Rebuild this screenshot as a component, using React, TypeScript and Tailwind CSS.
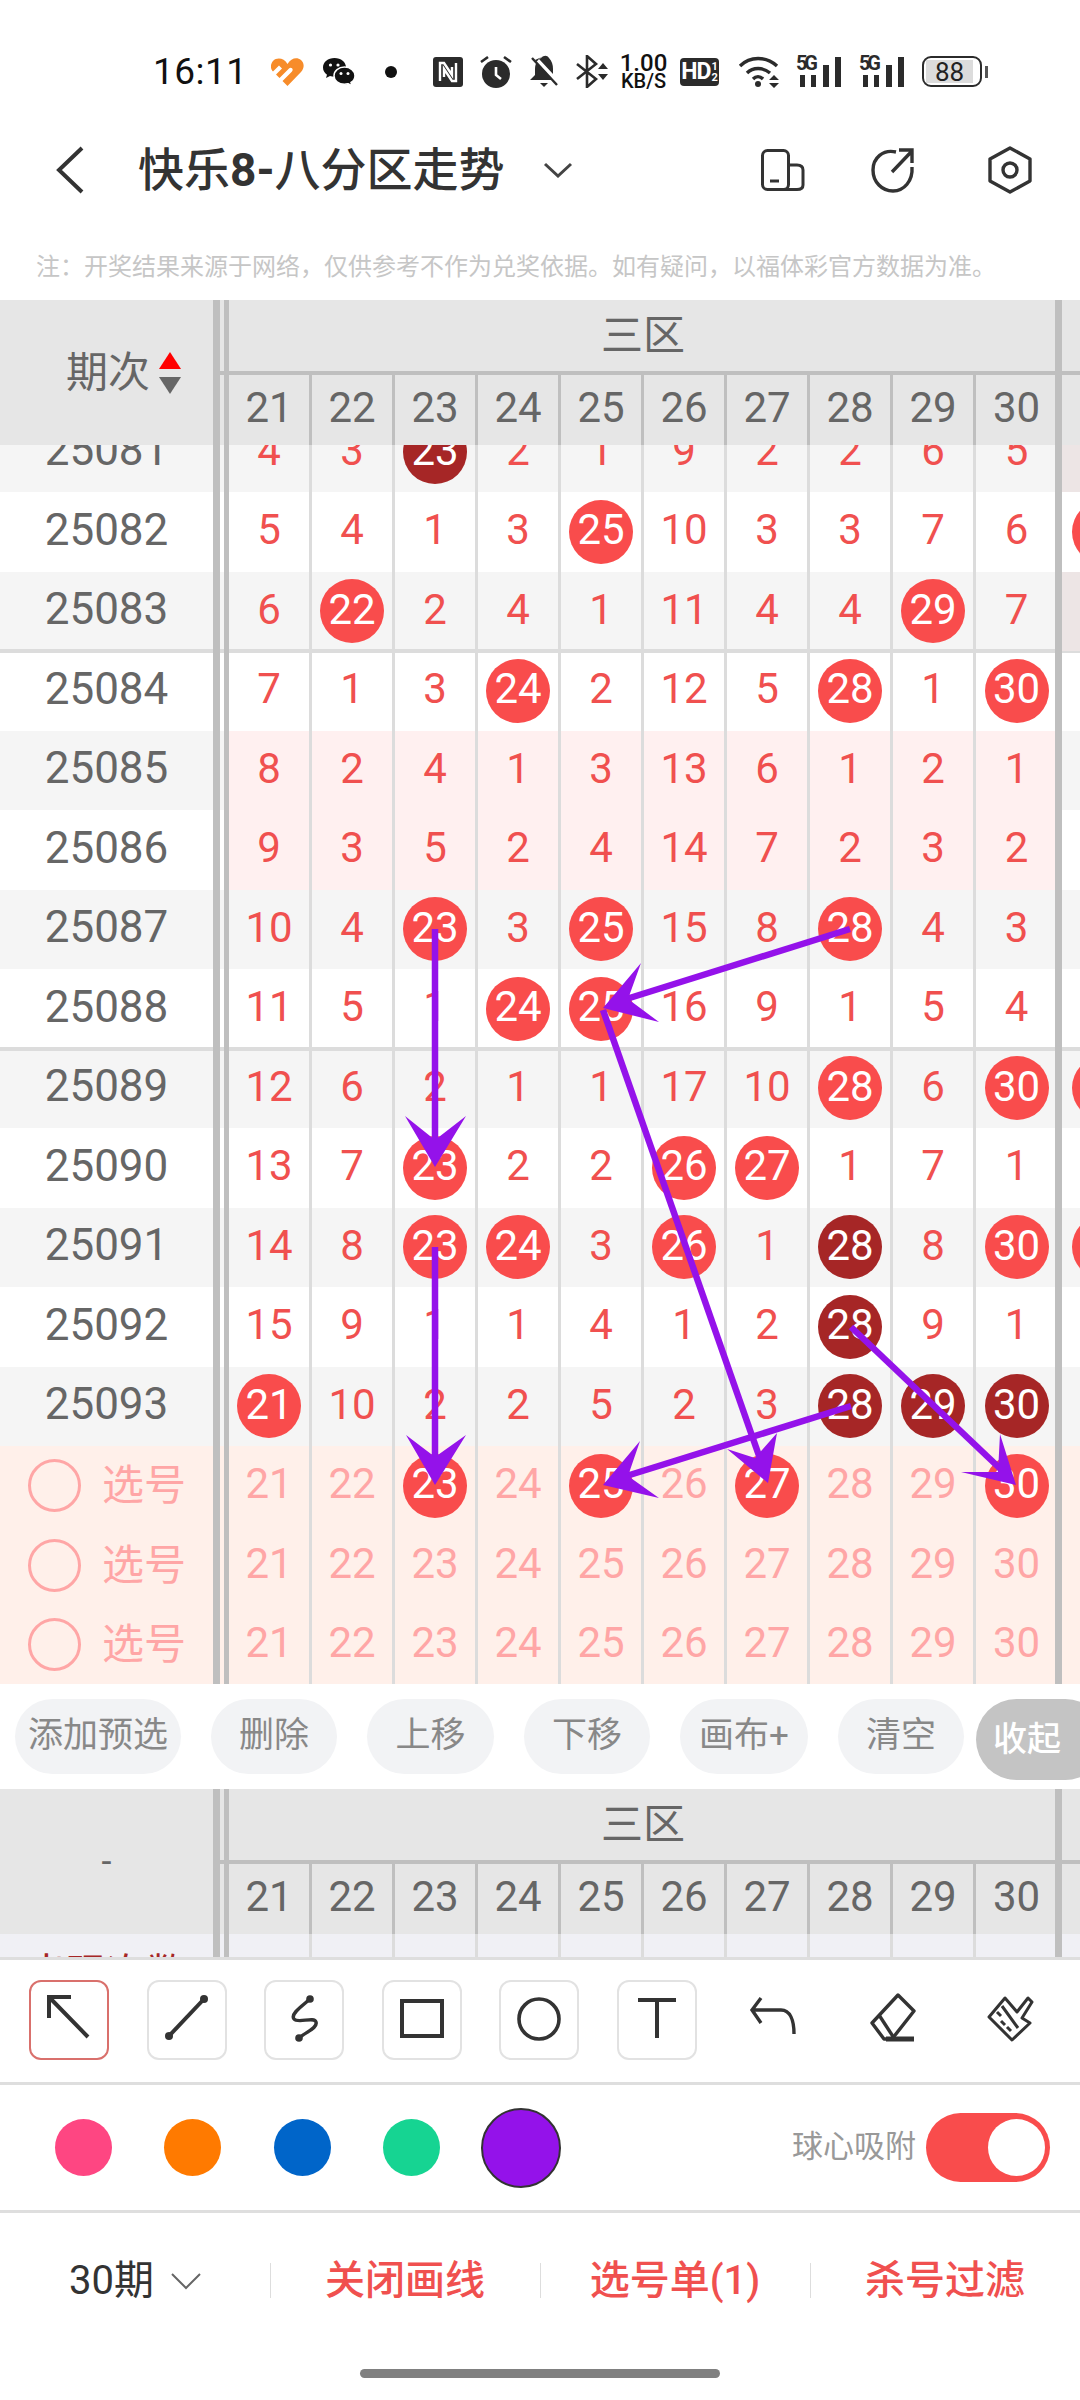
import React from 'react';

const ROWS: { id: string; v: string[]; side?: boolean; band?: boolean; sidePink?: boolean; lineB?: boolean; lineT?: boolean }[] = [
  { id: '25081', v: ['4', '3', '#23', '2', '1', '9', '2', '2', '6', '5'], sidePink: true },
  { id: '25082', v: ['5', '4', '1', '3', '*25', '10', '3', '3', '7', '6'], side: true },
  { id: '25083', v: ['6', '*22', '2', '4', '1', '11', '4', '4', '*29', '7'], sidePink: true, lineB: true },
  { id: '25084', v: ['7', '1', '3', '*24', '2', '12', '5', '*28', '1', '*30'], lineT: true },
  { id: '25085', v: ['8', '2', '4', '1', '3', '13', '6', '1', '2', '1'], band: true },
  { id: '25086', v: ['9', '3', '5', '2', '4', '14', '7', '2', '3', '2'], band: true },
  { id: '25087', v: ['10', '4', '*23', '3', '*25', '15', '8', '*28', '4', '3'] },
  { id: '25088', v: ['11', '5', '1', '*24', '*25', '16', '9', '1', '5', '4'], lineB: true },
  { id: '25089', v: ['12', '6', '2', '1', '1', '17', '10', '*28', '6', '*30'], side: true, lineT: true },
  { id: '25090', v: ['13', '7', '*23', '2', '2', '*26', '*27', '1', '7', '1'] },
  { id: '25091', v: ['14', '8', '*23', '*24', '3', '*26', '1', '#28', '8', '*30'], side: true },
  { id: '25092', v: ['15', '9', '1', '1', '4', '1', '2', '#28', '9', '1'] },
  { id: '25093', v: ['*21', '10', '2', '2', '5', '2', '3', '#28', '#29', '#30'] },
];

const PICKS = [
  ['21', '22', '*23', '24', '*25', '26', '*27', '28', '29', '*30'],
  ['21', '22', '23', '24', '25', '26', '27', '28', '29', '30'],
  ['21', '22', '23', '24', '25', '26', '27', '28', '29', '30'],
];

const HEAD = ['21', '22', '23', '24', '25', '26', '27', '28', '29', '30'];

function Ball({ n, dark }: { n: string; dark?: boolean }) {
  return (
    <span className={`w-[64px] h-[64px] rounded-full flex items-center justify-center text-white text-[42px] pb-[4px] ${dark ? 'bg-[#a62626]' : 'bg-[#f94c4c]'}`}>
      {n}
    </span>
  );
}

function Value({ t, pale }: { t: string; pale?: boolean }) {
  if (t[0] === '*') return <Ball n={t.slice(1)} />;
  if (t[0] === '#') return <Ball n={t.slice(1)} dark />;
  return <span className={`text-[42px] pb-[4px] ${pale ? 'text-[#ffa6a6]' : 'text-[#f0504f]'}`}>{t}</span>;
}

function Cells({ v, pale, band }: { v: string[]; pale?: boolean; band?: boolean }) {
  return (
    <>
      {v.map((t, i) => (
        <div
          key={i}
          className={`shrink-0 flex items-center justify-center ${i < 9 ? 'w-[83px] border-r-[3px] border-[#dcdcdc]' : 'w-[81px]'} ${band ? 'bg-[#fff0f0]' : ''}`}
        >
          <Value t={t} pale={pale} />
        </div>
      ))}
    </>
  );
}

function Sep() {
  return <div className="w-[7px] shrink-0 bg-[#bfbfbf]" />;
}

function DataRow({ r, idx }: { r: (typeof ROWS)[number]; idx: number }) {
  return (
    <div
      className={`flex h-[79.5px] w-[1145px] ${idx % 2 === 0 ? 'bg-[#f5f5f5]' : 'bg-white'} ${r.lineB ? 'shadow-[inset_0_-2px_0_#dcdcdc]' : ''} ${r.lineT ? 'shadow-[inset_0_2px_0_#dcdcdc]' : ''}`}
    >
      <div className="w-[213px] shrink-0 flex items-center justify-center text-[44px] text-[#666] pb-[4px]">{r.id}</div>
      <Sep />
      <div className="w-[4px] shrink-0" />
      <div className="w-[5px] shrink-0 bg-[#bfbfbf]" />
      <Cells v={r.v} band={r.band} />
      <div className="w-[7px] shrink-0 -ml-[2px] bg-[#bfbfbf] z-10" />
      <div className={`w-[83px] shrink-0 flex items-center justify-center ${r.sidePink ? 'bg-[#ede5e5]' : ''}`}>
        {r.side && <Ball n="31" />}
      </div>
    </div>
  );
}

function PickRow({ v }: { v: string[] }) {
  return (
    <div className="flex h-[79.5px] w-[1145px] bg-[#fff0ea]">
      <div className="w-[213px] shrink-0 flex items-center pl-[28px]">
        <span className="w-[53px] h-[53px] rounded-full border-[3px] border-[#ffa6a6]" />
        <span className="ml-[21px] text-[42px] text-[#ffa6a6]">选号</span>
      </div>
      <Sep />
      <div className="w-[4px] shrink-0" />
      <div className="w-[5px] shrink-0 bg-[#bfbfbf]" />
      <Cells v={v} pale />
      <div className="w-[7px] shrink-0 -ml-[2px] bg-[#bfbfbf] z-10" />
      <div className="w-[83px] shrink-0 flex items-center justify-center text-[42px] text-[#ffa6a6] pb-[4px]">31</div>
    </div>
  );
}

function TableHead({ label }: { label: React.ReactNode }) {
  return (
    <div className="flex h-[145px] w-[1145px] bg-[#e6e6e6] text-[#666]">
      <div className="w-[213px] shrink-0 flex items-center">{label}</div>
      <Sep />
      <div className="flex flex-col">
        <div className="flex h-[71px]">
          <div className="w-[4px] shrink-0" />
          <div className="w-[5px] shrink-0 bg-[#bfbfbf]" />
          <div className="w-[828px] shrink-0 flex items-center justify-center text-[42px]">三区</div>
          <div className="w-[7px] shrink-0 -ml-[2px] bg-[#bfbfbf]" />
        </div>
        <div className="h-[4px] w-[925px] bg-[#bfbfbf]" />
        <div className="flex h-[70px]">
          <div className="w-[4px] shrink-0" />
          <div className="w-[5px] shrink-0 bg-[#bfbfbf]" />
          {HEAD.map((n, i) => (
            <div
              key={n}
              className={`shrink-0 flex items-center justify-center text-[42px] pb-[6px] ${i < 9 ? 'w-[83px] border-r-[3px] border-[#bfbfbf]' : 'w-[81px]'}`}
            >
              {n}
            </div>
          ))}
          <div className="w-[7px] shrink-0 -ml-[2px] bg-[#bfbfbf]" />
          <div className="w-[83px] shrink-0 flex items-center justify-center text-[42px] pb-[6px]">31</div>
        </div>
      </div>
    </div>
  );
}

function StatusBar() {
  return (
    <div className="h-[130px] pt-[55px] pl-[153px]">
      <div className="flex items-center h-[33px] text-[#111]">
        <span className="w-[89px] shrink-0 text-[37px] leading-none tracking-[0.5px]">16:11</span>
        <svg className="ml-[29px] shrink-0" width="33" height="28" viewBox="0 0 33 28" fill="#f78c2a">
          <path d="M16.5 6C13 0 6 -1 2 3C-1 6.5 -0.5 11 2 13.5L8 7.5L11 10.5L5 16.5L8.5 20L18 10.5C20 8.5 23 11 21 13.5L11.5 23L16.5 28L30 14C34 9.5 33 4.5 30 2C26 -1 20 0 16.5 6Z" />
        </svg>
        <svg className="ml-[19px] shrink-0" width="32" height="28" viewBox="0 0 32 28">
          <path d="M11.5 0C5 0 0 4 0 9.5C0 12.5 1.5 15 4 16.7L3 20L7 18C8.5 18.5 10 18.7 11.5 18.7C18 18.7 23 14.5 23 9.5C23 4 18 0 11.5 0Z" fill="#111" />
          <path d="M21.5 9C15.5 9 11 13 11 17.7C11 22.5 15.5 26.3 21.5 26.3C23 26.3 24 26 25.3 25.7L29 27.8L28 24.5C30.5 23 32 20.5 32 17.7C32 13 27.5 9 21.5 9Z" fill="#111" stroke="white" strokeWidth="1.5" />
          <circle cx="7.5" cy="7" r="1.6" fill="white" />
          <circle cx="15" cy="7" r="1.6" fill="white" />
          <circle cx="18" cy="15.5" r="1.5" fill="white" />
          <circle cx="25" cy="15.5" r="1.5" fill="white" />
        </svg>
        <span className="ml-[30px] w-[12px] h-[12px] rounded-full bg-[#111] shrink-0" />
        <svg className="ml-[36px] shrink-0" width="30" height="30" viewBox="0 0 30 30">
          <rect width="30" height="30" rx="3" fill="#2b2b2b" />
          <path d="M7 24V6H11L19 18V10M23 6V24H19L11 12V20" fill="none" stroke="white" strokeWidth="2.4" />
        </svg>
        <svg className="ml-[17px] shrink-0" width="32" height="33" viewBox="0 0 32 33">
          <circle cx="16" cy="19" r="14" fill="#2b2b2b" />
          <path d="M16 12V20L21 24" fill="none" stroke="white" strokeWidth="2.6" />
          <path d="M1 7L8 2M31 7L24 2" stroke="#2b2b2b" strokeWidth="2.6" />
        </svg>
        <svg className="ml-[17px] shrink-0" width="30" height="33" viewBox="0 0 30 33">
          <path d="M15 1C9 3 6 8 6 14V20L1 25H24L6 5Z" fill="#2b2b2b" />
          <path d="M12 3C15 0 18 0 20 3C23 6 24 10 24 14V19L10 4Z" fill="#2b2b2b" />
          <path d="M3 3L28 30" stroke="#2b2b2b" strokeWidth="2.4" />
          <path d="M11 28H19L15 32Z" fill="#2b2b2b" />
        </svg>
        <svg className="ml-[17px] shrink-0" width="32" height="33" viewBox="0 0 32 33">
          <path d="M1 9L20 24L11 32V1L20 9L1 24" fill="none" stroke="#2b2b2b" strokeWidth="2.6" />
          <path d="M22 14L27 8L32 14ZM22 19L27 25L32 19Z" fill="#2b2b2b" />
        </svg>
        <div className="ml-[12px] w-[47px] shrink-0 flex flex-col items-center font-medium">
          <span className="text-[24px] leading-[19px]">1.00</span>
          <span className="text-[20px] leading-[17px]">KB/S</span>
        </div>
        <div className="ml-[13px] w-[39px] h-[28px] shrink-0 rounded-[4px] bg-[#2b2b2b] text-white flex items-center justify-center font-bold">
          <span className="text-[23px] leading-none tracking-[-1px]">HD</span>
          <span className="flex flex-col text-[11px] leading-[11px] ml-[1px]">
            <span>1</span>
            <span>2</span>
          </span>
        </div>
        <svg className="ml-[19px] shrink-0" width="42" height="33" viewBox="0 0 42 33" fill="none" stroke="#2b2b2b" strokeWidth="3.4">
          <path d="M2 11C12 1 28 1 39 11" />
          <path d="M9 18C15 12 25 12 32 18" />
          <path d="M15 24C18 21 22 21 25 24" />
          <circle cx="20" cy="29" r="3" fill="#2b2b2b" stroke="none" />
          <path d="M31 25L36 20L41 25ZM31 28L36 33L41 28Z" fill="#2b2b2b" stroke="none" />
        </svg>
        {[0, 1].map((k) => (
          <svg key={k} className={`${k === 0 ? 'ml-[16px]' : 'ml-[17px]'} shrink-0`} width="46" height="33" viewBox="0 0 46 33">
            <text x="0" y="15" fontFamily="Roboto, sans-serif" fontSize="20" fontWeight="700" fill="#2b2b2b" textLength="22">5G</text>
            <rect x="4" y="20" width="5" height="12" fill="#2b2b2b" />
            <rect x="15" y="20" width="5" height="12" fill="#2b2b2b" />
            <rect x="27" y="10" width="6" height="22" fill="#2b2b2b" />
            <rect x="39" y="2" width="6" height="30" fill="#2b2b2b" />
          </svg>
        ))}
        <div className="ml-[17px] w-[60px] h-[31px] shrink-0 border-[2px] border-[#2b2b2b] rounded-[9px] p-[2px]">
          <div className="w-[47px] h-full bg-[#dcdcdc] flex items-center justify-center text-[26px] leading-none text-[#222]">88</div>
        </div>
        <span className="ml-[3px] w-[3px] h-[12px] bg-[#555] shrink-0" />
      </div>
    </div>
  );
}

function NavBar() {
  return (
    <div className="h-[80px] flex items-center relative text-[#333]">
      <svg className="ml-[54px] shrink-0" width="32" height="48" viewBox="0 0 32 48" fill="none" stroke="#333" strokeWidth="4">
        <path d="M28 2L5 24L28 46" />
      </svg>
      <span className="ml-[52px] text-[46px] font-medium leading-none whitespace-nowrap">
        快乐<span className="font-bold">8-</span>八分区走势
      </span>
      <svg className="ml-[38px] shrink-0" width="30" height="16" viewBox="0 0 30 16" fill="none" stroke="#444" strokeWidth="3">
        <path d="M2 2L15 14L28 2" />
      </svg>
      <svg className="ml-[188px] shrink-0" width="44" height="42" viewBox="0 0 44 42" fill="none" stroke="#333" strokeWidth="3">
        <rect x="1.5" y="1.5" width="26" height="39" rx="5" />
        <path d="M27 16H36C40 16 42 18 42 21V36C42 39 40 40.5 36 40.5H20" />
        <path d="M9 32H18" />
      </svg>
      <svg className="ml-[66px] shrink-0" width="44" height="46" viewBox="0 0 44 46" fill="none" stroke="#333" strokeWidth="3.4">
        <path d="M25 5C12 2 2 11 2 23C2 35 11 44 22 44C33 44 42 34 41 20" />
        <path d="M21 25L41 4M28 3H41V16" />
      </svg>
      <svg className="ml-[73px] shrink-0" width="44" height="48" viewBox="0 0 44 48" fill="none" stroke="#333" strokeWidth="3.4">
        <path d="M22 2L42 13V35L22 46L2 35V13Z" strokeLinejoin="round" />
        <circle cx="22" cy="24" r="7" />
      </svg>
    </div>
  );
}

function DrawLines() {
  const stroke = '#9412ea';
  const lines = [
    [850, 929, 620, 1001],
    [435, 929, 435, 1145],
    [435, 1247, 435, 1460],
    [603, 1010, 764, 1470],
    [851, 1406, 620, 1478],
    [851, 1327, 1010, 1478],
  ];
  const heads = [
    '603,1008 641,963 628,999 659,1022',
    '435,1167 405,1116 435,1140 466,1116',
    '435,1485 406,1435 435,1457 466,1435',
    '768,1483 727,1449 755,1458 777,1433',
    '603,1485 640,1441 628,1476 659,1498',
    '1016,1485 1000,1434 998,1472 961,1472',
  ];
  return (
    <svg className="absolute left-0 top-0 pointer-events-none z-20" width="1080" height="2400" viewBox="0 0 1080 2400">
      {lines.map(([a, b, c, d], i) => (
        <line key={i} x1={a} y1={b} x2={c} y2={d} stroke={stroke} strokeWidth="6.5" />
      ))}
      {heads.map((p) => (
        <polygon key={p} points={p} fill={stroke} />
      ))}
    </svg>
  );
}

const CHIPS: [string, string][] = [
  ['添加预选', 'w-[166px]'],
  ['删除', 'w-[126px]'],
  ['上移', 'w-[127px]'],
  ['下移', 'w-[126px]'],
  ['画布+', 'w-[128px]'],
  ['清空', 'w-[126px]'],
];

function ChipBar() {
  return (
    <div className="h-[105px] flex items-start pt-[15px] pl-[15px] gap-[30px] bg-white w-[1145px]">
      {CHIPS.map(([t, w]) => (
        <span key={t} className={`${w} h-[75px] shrink-0 rounded-full bg-[#f2f3f5] text-[#888] text-[35px] flex items-center justify-center`}>
          {t}
        </span>
      ))}
      <span className="w-[130px] h-[81px] shrink-0 -ml-[18px] rounded-full bg-[#c4c4c4] text-white text-[34px] font-medium flex items-center pl-[17px]">
        收起
      </span>
    </div>
  );
}

function ToolBox({ active, children }: { active?: boolean; children: React.ReactNode }) {
  return (
    <div className={`w-[80px] h-[80px] shrink-0 rounded-[12px] border-[2px] flex items-center justify-center ${active ? 'border-[#d9706c]' : 'border-[#e2e2e2]'}`}>
      {children}
    </div>
  );
}

function ToolBar() {
  const ic = { width: 60, height: 60, viewBox: '0 0 60 60', fill: 'none', stroke: '#333', strokeWidth: 4 };
  return (
    <div className="h-[125px] border-t-[3px] border-[#dedede] flex items-start pt-[20px] pl-[29px] gap-[37.6px] bg-white">
      <ToolBox active>
        <svg {...ic}>
          <path d="M10 28V7H32M10 7L49 47" strokeWidth="4" />
        </svg>
      </ToolBox>
      <ToolBox>
        <svg {...ic}>
          <path d="M12 46L47 9" />
          <circle cx="12" cy="46" r="4" fill="#333" stroke="none" />
          <circle cx="47" cy="9" r="4" fill="#333" stroke="none" />
        </svg>
      </ToolBox>
      <ToolBox>
        <svg {...ic} strokeWidth="3.4">
          <path d="M36 9C28 16 16 24 20 29C24 34 40 26 42 32C44 38 32 42 25 48" />
          <circle cx="36" cy="9" r="3.8" fill="#333" stroke="none" />
          <circle cx="25" cy="48" r="3.8" fill="#333" stroke="none" />
        </svg>
      </ToolBox>
      <ToolBox>
        <svg {...ic}>
          <rect x="10" y="11" width="40" height="35" />
        </svg>
      </ToolBox>
      <ToolBox>
        <svg {...ic} strokeWidth="3.6">
          <circle cx="30" cy="29" r="20" />
        </svg>
      </ToolBox>
      <ToolBox>
        <svg {...ic}>
          <path d="M11 10H49M30 10V48" />
        </svg>
      </ToolBox>
      <div className="w-[80px] shrink-0 flex justify-center items-center h-[80px]">
        <svg {...ic} strokeWidth="3.4">
          <path d="M16 8L7 20L16 33M7 20H36C45 20 49 30 49 44" />
        </svg>
      </div>
      <div className="w-[80px] shrink-0 flex justify-center items-center h-[80px]">
        <svg {...ic} strokeWidth="3.4">
          <path d="M36 5L52 21L30 49H22L10 33Z" strokeLinejoin="round" />
          <path d="M17 25L32 48" />
          <path d="M24 49H52" strokeWidth="5" />
        </svg>
      </div>
      <div className="w-[80px] shrink-0 flex justify-center items-center h-[80px]">
        <svg {...ic} strokeWidth="3">
          <path d="M25 8L37 22L48 8L52 12L42 28L50 33L32 50L9 27Z" strokeLinejoin="round" />
          <path d="M17 22L21 26M22 16L38 38M21 31L25 35M27 37L31 41" />
        </svg>
      </div>
    </div>
  );
}

function ColorBar() {
  return (
    <div className="h-[128px] border-t-[3px] border-[#dedede] flex items-center pl-[55px] bg-white">
      <span className="w-[57px] h-[57px] shrink-0 rounded-full bg-[#fe4682]" />
      <span className="ml-[52px] w-[57px] h-[57px] shrink-0 rounded-full bg-[#ff7a00]" />
      <span className="ml-[53px] w-[57px] h-[57px] shrink-0 rounded-full bg-[#0065c9]" />
      <span className="ml-[52px] w-[57px] h-[57px] shrink-0 rounded-full bg-[#16d492]" />
      <span className="ml-[41px] w-[80px] h-[80px] shrink-0 rounded-full bg-[#9412ea] border-[2px] border-[#333]" />
      <span className="ml-[231px] text-[31px] text-[#999] whitespace-nowrap w-[125px]">球心吸附</span>
      <div className="ml-[9px] w-[124px] h-[69px] rounded-full bg-[#f94c4c] flex items-center justify-end pr-[5px] shrink-0">
        <span className="w-[57px] h-[57px] rounded-full bg-white" />
      </div>
    </div>
  );
}

function BottomBar() {
  return (
    <div className="flex-1 border-t-[3px] border-[#dedede] bg-white flex flex-col">
      <div className="flex items-center h-[136px]">
        <div className="w-[270px] flex items-center pl-[69px] text-[#333]">
          <span className="text-[40px] whitespace-nowrap">30期</span>
          <svg className="ml-[17px]" width="30" height="17" viewBox="0 0 30 17" fill="none" stroke="#666" strokeWidth="2">
            <path d="M1 1L15 15L29 1" />
          </svg>
        </div>
        {['关闭画线', '选号单(1)', '杀号过滤'].map((t) => (
          <div key={t} className="w-[270px] flex items-center justify-center relative text-[40px] font-medium text-[#f0504f] whitespace-nowrap">
            <span className="absolute left-0 top-[12px] w-px h-[35px] bg-[#dddddd]" />
            {t}
          </div>
        ))}
      </div>
      <div className="mt-[20px] mx-auto w-[360px] h-[9px] rounded-full bg-[#808080]" />
    </div>
  );
}

export default function App() {
  return (
    <div className="relative w-[1080px] h-[2400px] overflow-hidden bg-white flex flex-col font-[Roboto,'Noto_Sans_CJK_SC',sans-serif]">
      <StatusBar />
      <NavBar />
      <div className="h-[90px] pt-[43px] pl-[36px] text-[24px] leading-[28px] text-[#c6c6c6] whitespace-nowrap">
        注：开奖结果来源于网络，仅供参考不作为兑奖依据。如有疑问，以福体彩官方数据为准。
      </div>

      <TableHead
        label={
          <div className="flex items-center pl-[66px]">
            <span className="text-[42px]">期次</span>
            <svg className="ml-[9px]" width="22" height="42" viewBox="0 0 22 42">
              <path d="M11 0L22 17H0Z" fill="#ff0000" />
              <path d="M0 25H22L11 42Z" fill="#666666" />
            </svg>
          </div>
        }
      />
      <div className="h-[1239px] overflow-hidden">
        <div className="-mt-[32.5px]">
          {ROWS.map((r, i) => (
            <DataRow key={r.id} r={r} idx={i} />
          ))}
          {PICKS.map((v, i) => (
            <PickRow key={i} v={v} />
          ))}
        </div>
      </div>

      <ChipBar />

      <TableHead label={<div className="w-full text-center text-[36px]">-</div>} />
      <div className="h-[23px] overflow-hidden bg-[#f0f0f5]">
        <div className="flex h-[80px] w-[1145px]">
          <div className="w-[213px] shrink-0 flex items-center justify-center text-[40px] text-[#a62626]">出现次数</div>
          <Sep />
          <div className="w-[4px] shrink-0" />
          <div className="w-[5px] shrink-0 bg-[#bfbfbf]" />
          {['5', '4', '13', '3', '13', '1', '4', '3', '3', '5'].map((n, i) => (
            <div key={i} className={`shrink-0 flex items-center justify-center text-[42px] text-[#a62626] ${i < 9 ? 'w-[83px] border-r-[3px] border-[#dcdcdc]' : 'w-[81px]'}`}>
              {n}
            </div>
          ))}
          <div className="w-[7px] shrink-0 -ml-[2px] bg-[#bfbfbf]" />
        </div>
      </div>

      <ToolBar />
      <ColorBar />
      <BottomBar />
      <DrawLines />
    </div>
  );
}
